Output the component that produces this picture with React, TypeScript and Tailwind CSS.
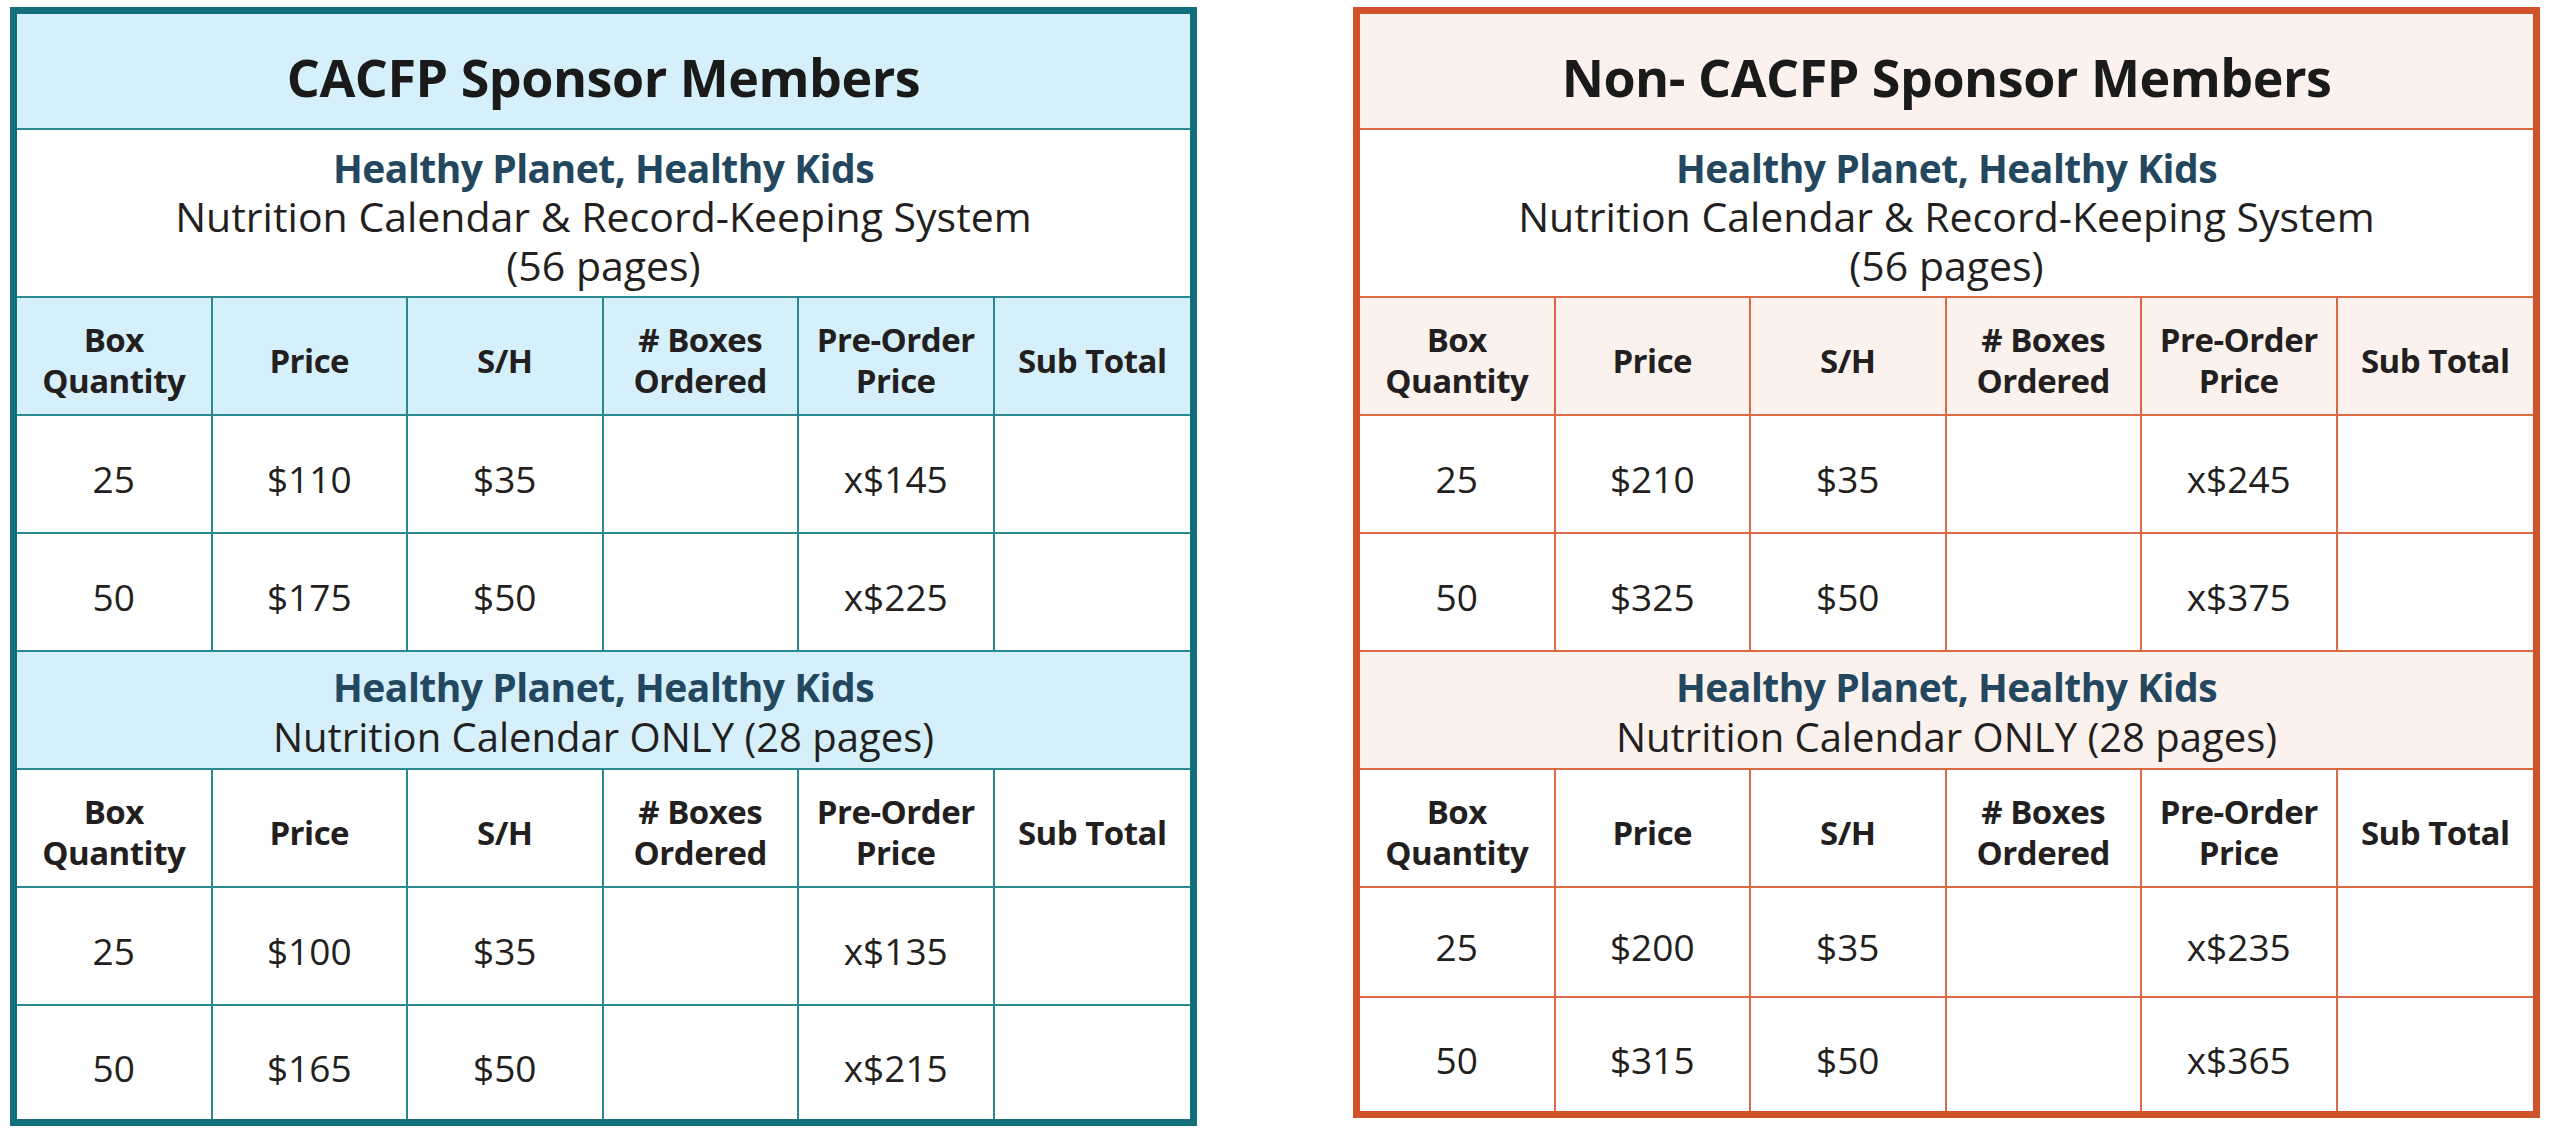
import React from "react";

type Theme = {
  outer: string;
  line: string;
  band: string;
  divide: string;
};

const teal: Theme = {
  outer: "border-[#13707b]",
  line: "border-[#2a8893]",
  band: "bg-[#d5effb]",
  divide: "divide-[#2a8893]",
};

const orange: Theme = {
  outer: "border-[#cf5229]",
  line: "border-[#dc6b45]",
  band: "bg-[#fbf2ed]",
  divide: "divide-[#dc6b45]",
};

const HEAD = ["Box\nQuantity", "Price", "S/H", "# Boxes\nOrdered", "Pre-Order\nPrice", "Sub Total"];

function Row({
  cells,
  theme,
  h,
  bold,
  band,
  last,
}: {
  cells: string[];
  theme: Theme;
  h: string;
  bold?: boolean;
  band?: boolean;
  last?: boolean;
}) {
  return (
    <div
      className={`grid grid-cols-6 divide-x-2 ${theme.divide} ${last ? "" : `border-b-2 ${theme.line}`} ${h} ${
        band ? theme.band : "bg-white"
      }`}
    >
      {cells.map((c, i) => (
        <div
          key={i}
          className={`flex items-center justify-center text-center whitespace-pre-line text-[#231f20] ${
            bold
              ? "font-bold text-[33px] leading-[41px] tracking-[-0.5px] pt-[8px]"
              : "text-[37px] leading-[40px] pt-[10px]"
          }`}
        >
          {c}
        </div>
      ))}
    </div>
  );
}

function Table({
  theme,
  title,
  a,
  b,
  c,
  d,
  lastH,
  prevH,
  outerH,
}: {
  theme: Theme;
  title: string;
  a: string[];
  b: string[];
  c: string[];
  d: string[];
  prevH: string;
  lastH: string;
  outerH: string;
}) {
  return (
    <div className={`w-[1187px] ${outerH} border-[7px] ${theme.outer} flex flex-col`}>
      <div
        className={`h-[116px] border-b-2 ${theme.line} ${theme.band} flex items-center justify-center pt-[12px] text-[52px] font-bold text-[#1b1a1b] tracking-[-0.5px]`}
      >
        {title}
      </div>
      <div
        className={`h-[168px] border-b-2 ${theme.line} bg-white flex flex-col items-center justify-center pt-[6px]`}
      >
        <div className="text-[39px] leading-[49px] font-bold text-[#23475e] tracking-[-0.5px]">
          Healthy Planet, Healthy Kids
        </div>
        <div className="text-[41px] leading-[49px] text-[#231f20] text-center whitespace-pre-line">
          {"Nutrition Calendar & Record-Keeping System\n(56 pages)"}
        </div>
      </div>
      <Row cells={HEAD} theme={theme} h="h-[118px]" bold band />
      <Row cells={a} theme={theme} h="h-[118px]" />
      <Row cells={b} theme={theme} h="h-[118px]" />
      <div
        className={`h-[118px] border-b-2 ${theme.line} ${theme.band} flex flex-col items-center justify-center pt-[4px]`}
      >
        <div className="text-[39px] leading-[50px] font-bold text-[#23475e] tracking-[-0.5px]">
          Healthy Planet, Healthy Kids
        </div>
        <div className="text-[40px] leading-[50px] text-[#231f20]">Nutrition Calendar ONLY (28 pages)</div>
      </div>
      <Row cells={HEAD} theme={theme} h="h-[118px]" bold />
      <Row cells={c} theme={theme} h={prevH} />
      <Row cells={d} theme={theme} h={lastH} last />
    </div>
  );
}

export default function App() {
  return (
    <div
      className="w-[2560px] h-[1133px] bg-white flex items-start gap-[156px] pl-[10px] pt-[7px]"
      style={{ fontFamily: '"Open Sans", "Noto Sans", sans-serif' }}
    >
      <Table
        theme={teal}
        title="CACFP Sponsor Members"
        a={["25", "$110", "$35", "", "x$145", ""]}
        b={["50", "$175", "$50", "", "x$225", ""]}
        c={["25", "$100", "$35", "", "x$135", ""]}
        d={["50", "$165", "$50", "", "x$215", ""]}
        prevH="h-[118px]"
        lastH="flex-1"
        outerH="h-[1119px]"
      />
      <Table
        theme={orange}
        title="Non- CACFP Sponsor Members"
        a={["25", "$210", "$35", "", "x$245", ""]}
        b={["50", "$325", "$50", "", "x$375", ""]}
        c={["25", "$200", "$35", "", "x$235", ""]}
        d={["50", "$315", "$50", "", "x$365", ""]}
        prevH="h-[110px]"
        lastH="flex-1"
        outerH="h-[1111px]"
      />
    </div>
  );
}
